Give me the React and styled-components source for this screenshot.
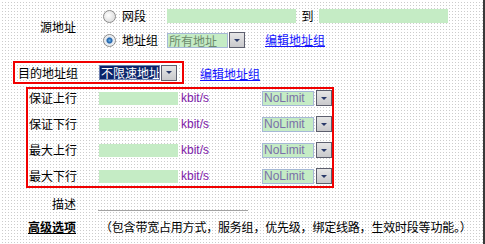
import React from 'react';
import styled, { createGlobalStyle } from 'styled-components';

const GlobalStyle = createGlobalStyle`
  html, body {
    margin: 0;
    padding: 0;
    background: #fff;
  }
  body {
    font-family: "Noto Sans CJK SC", "Noto Sans", sans-serif;
    font-size: 12px;
    line-height: 14px;
    color: #000;
  }
`;

const Page = styled.div`
  width: 485px;
  height: 244px;
  box-sizing: border-box;
  border-right: 2px solid #3a3a3a;
  background-color: #cccccc;
  background-image: linear-gradient(90deg, #fff 2px, transparent 2px),
    linear-gradient(#fff 2px, transparent 2px);
  background-size: 3px 3px;
  padding-top: 9px;
  overflow: hidden;
`;

const SourceBlock = styled.div`
  display: flex;
`;

const SideLabel = styled.div`
  width: 76px;
  flex: none;
  text-align: right;
  align-self: center;
  margin-bottom: ${(p) => p.$lift || 0}px;
  font-weight: ${(p) => (p.$bold ? 'bold' : 'normal')};
  text-decoration: ${(p) => (p.$underline ? 'underline' : 'none')};
`;

const Options = styled.div`
  margin-left: 27px;
  display: flex;
  flex-direction: column;
  gap: 9px;
`;

const OptionRow = styled.div`
  display: flex;
  align-items: center;
  height: ${(p) => p.$h}px;
`;

const Radio = styled.span`
  width: 11px;
  height: 11px;
  flex: none;
  border-radius: 50%;
  border: 1px solid #8a8a8a;
  margin-right: 6px;
  background: ${(p) =>
    p.$checked
      ? 'radial-gradient(circle at 50% 50%, #6fb4e8 0, #1d5fa8 2.5px, #dfe6ee 3.5px, #f4f4f4 6px)'
      : 'radial-gradient(circle at 40% 40%, #ffffff 0, #e2e2e2 6px)'};
`;

const OptionText = styled.span`
  width: 45px;
  flex: none;
`;

const GreenInput = styled.div`
  width: ${(p) => p.$w}px;
  height: ${(p) => p.$h || 14}px;
  flex: none;
  background: #c5ecc5;
`;

const Between = styled.span`
  width: 23px;
  text-align: center;
  flex: none;
`;

const Dropdown = styled.div`
  display: flex;
  align-items: center;
  gap: ${(p) => p.$gap}px;
  height: 17px;
  flex: none;
`;

const Field = styled.div`
  width: ${(p) => p.$w}px;
  height: 15px;
  box-sizing: border-box;
  border: 1px solid ${(p) => (p.$selected ? '#6d7fb0' : '#a6b8d6')};
  background: ${(p) => (p.$selected ? '#0a246a' : '#c5ecc5')};
  color: ${(p) => (p.$selected ? '#fff' : p.$color)};
  font-family: ${(p) =>
    p.$latin ? '"Liberation Sans", Arial, sans-serif' : 'inherit'};
  font-size: 12px;
  line-height: 13px;
  padding-left: 1px;
  white-space: nowrap;
  overflow: hidden;
`;

const DropButton = styled.div`
  width: 16px;
  height: 16px;
  box-sizing: border-box;
  border: 1px solid #5d5f6e;
  background: linear-gradient(#e6e6e6, #c9c9cc);
  display: flex;
  align-items: center;
  justify-content: center;
  &::after {
    content: '';
    border-left: 3px solid transparent;
    border-right: 3px solid transparent;
    border-top: 3px solid #2a3a6a;
  }
`;

const Link = styled.a`
  color: #1414ff;
  text-decoration: underline;
  margin-left: ${(p) => p.$ml}px;
  margin-top: ${(p) => p.$mt || 0}px;
  cursor: pointer;
`;

const DestRow = styled.div`
  display: flex;
  align-items: center;
  margin-top: 13px;
`;

const RedBox = styled.div`
  border: 2px solid #f00000;
  box-sizing: border-box;
  margin-left: ${(p) => p.$ml}px;
  width: ${(p) => p.$w}px;
`;

const DestBox = styled(RedBox)`
  height: 23px;
  display: flex;
  align-items: center;
  padding-left: 3px;
`;

const DestLabel = styled.span`
  width: 81px;
  flex: none;
`;

const LimitBox = styled(RedBox)`
  margin-top: 3px;
  display: grid;
  grid-auto-rows: 18px;
  row-gap: 8px;
  padding: 0 0 1px 1px;
`;

const LimitRow = styled.div`
  display: flex;
  align-items: center;
`;

const LimitLabel = styled.span`
  width: 70px;
  flex: none;
`;

const Unit = styled.span`
  width: 81px;
  flex: none;
  margin-left: 3px;
  color: #8020a8;
  font-family: "Liberation Sans", Arial, sans-serif;
  font-size: 12px;
`;

const DescRow = styled.div`
  display: flex;
  margin-top: 8px;
  height: 15px;
`;

const DescLine = styled.div`
  margin-left: 22px;
  width: 150px;
  align-self: flex-end;
  border-bottom: 1px solid #a3a3a3;
`;

const AdvRow = styled.div`
  display: flex;
  margin-top: 9px;
  white-space: nowrap;
`;

const AdvNote = styled.span`
  margin-left: 24px;
  letter-spacing: -0.2px;
`;

function Select({ text, widths, gap, selected, latin, color }) {
  return (
    <Dropdown $gap={gap}>
      <Field $w={widths} $selected={selected} $latin={latin} $color={color}>
        {text}
      </Field>
      <DropButton />
    </Dropdown>
  );
}

const limits = ['保证上行', '保证下行', '最大上行', '最大下行'];

export default function App() {
  return (
    <>
      <GlobalStyle />
      <Page>
        <SourceBlock>
          <SideLabel $lift={4}>源地址</SideLabel>
          <Options>
            <OptionRow $h={14}>
              <Radio />
              <OptionText>网段</OptionText>
              <GreenInput $w={129} />
              <Between>到</Between>
              <GreenInput $w={129} />
            </OptionRow>
            <OptionRow $h={16}>
              <Radio $checked />
              <OptionText>地址组</OptionText>
              <Select text="所有地址" widths={61} gap={1} color="#6c8a6c" />
              <Link $ml={20}>编辑地址组</Link>
            </OptionRow>
          </Options>
        </SourceBlock>

        <DestRow>
          <DestBox $ml={13} $w={171}>
            <DestLabel>目的地址组</DestLabel>
            <Select text="不限速地址" widths={61} gap={1} selected />
          </DestBox>
          <Link $ml={16} $mt={3}>编辑地址组</Link>
        </DestRow>

        <LimitBox $ml={26} $w={308}>
          {limits.map((name) => (
            <LimitRow key={name}>
              <LimitLabel>{name}</LimitLabel>
              <GreenInput $w={79} $h={13} />
              <Unit>kbit/s</Unit>
              <Select text="NoLimit" widths={52} gap={2} latin color="#7a70a8" />
            </LimitRow>
          ))}
        </LimitBox>

        <DescRow>
          <SideLabel>描述</SideLabel>
          <DescLine />
        </DescRow>

        <AdvRow>
          <SideLabel $bold $underline>高级选项</SideLabel>
          <AdvNote>（包含带宽占用方式，服务组，优先级，绑定线路，生效时段等功能。）</AdvNote>
        </AdvRow>
      </Page>
    </>
  );
}
